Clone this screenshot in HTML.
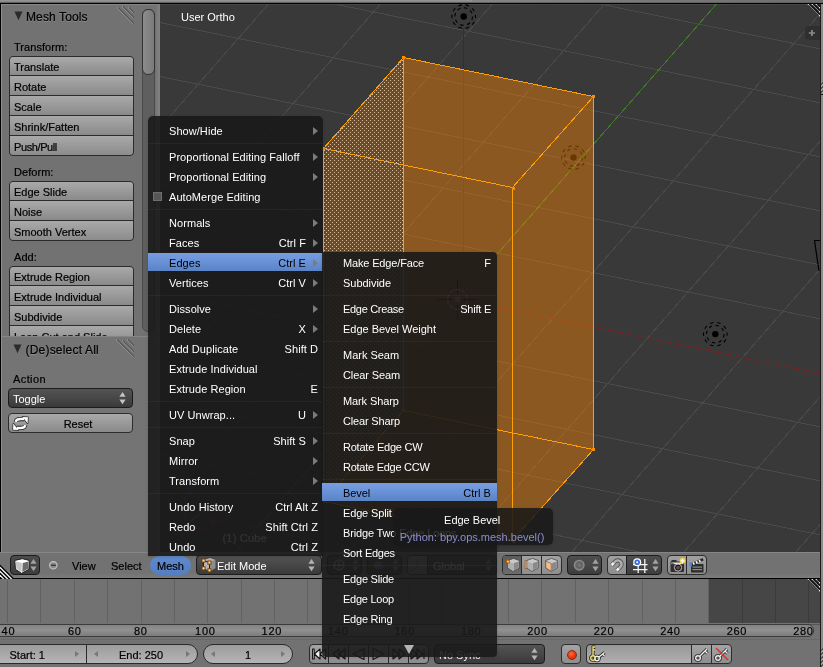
<!DOCTYPE html><html><head><meta charset="utf-8"><title>Blender</title><style>
*{box-sizing:border-box;margin:0;padding:0}
html,body{width:823px;height:667px;overflow:hidden;background:#727272}
body{position:relative;will-change:transform;-webkit-font-smoothing:antialiased;font-family:"Liberation Sans",sans-serif;font-size:11px;color:#000;line-height:20px;-webkit-text-stroke-width:0.2px}
.a{position:absolute}
.t{position:absolute;white-space:nowrap;height:20px;line-height:20px}
.btn{position:absolute;border:1px solid #2d2d2d;background:linear-gradient(#a9a9a9,#8a8a8a);white-space:nowrap}
.grp{position:absolute;border:1px solid #2b2b2b;border-radius:4px;overflow:hidden;background:#2b2b2b}
.grp div{position:absolute;left:0;right:0;background:linear-gradient(#a9a9a9,#8a8a8a);padding-left:4px;white-space:nowrap}
.dark{-webkit-text-stroke-width:0;position:absolute;border:1px solid #1c1c1c;border-radius:4px;background:linear-gradient(#545454,#3a3a3a);color:#fff;white-space:nowrap}
.menu{position:absolute;background:rgba(25,25,25,0.9);color:#fff;-webkit-text-stroke-width:0;box-shadow:0 1px 3px rgba(0,0,0,0.15)}
.mi{position:absolute;left:0;right:0;height:20px;line-height:20px;white-space:nowrap;letter-spacing:0.06px}
.mi .l{position:absolute;left:21px;top:0}
.mi .r{position:absolute;right:17px;top:0}
.mi.sel{height:18px;color:#000;background:linear-gradient(#789ee2,#5a84c8)}
.sep{position:absolute;left:0;right:0;height:1px;background:rgba(255,255,255,0.045)}
.arr{position:absolute;right:5px;top:6px;width:0;height:0;border-left:5px solid #7c7c7c;border-top:4px solid transparent;border-bottom:4px solid transparent}
.nf{position:absolute;top:644px;height:20px;border:1px solid #2a2a2a;background:linear-gradient(#9c9c9c,#b5b5b5);text-align:center;line-height:20px;white-space:nowrap}
.al{position:absolute;left:7px;top:6px;border-right:4px solid #777;border-top:3px solid transparent;border-bottom:3px solid transparent}
.ar{position:absolute;right:7px;top:6px;border-left:4px solid #777;border-top:3px solid transparent;border-bottom:3px solid transparent}
</style></head><body>
<svg class="a" style="left:0;top:0" width="823" height="667" viewBox="0 0 823 667" shape-rendering="crispEdges">
<defs><clipPath id="vp"><rect x="160" y="4" width="660" height="548"/></clipPath>
<pattern id="stip" width="4" height="4" patternUnits="userSpaceOnUse"><rect width="4" height="4" fill="#6b4a28"/><rect x="2" y="0" width="1" height="1" fill="#d4bc9c"/><rect x="0" y="2" width="1" height="1" fill="#d4bc9c"/></pattern>
</defs>
<rect x="160" y="4" width="660" height="548" fill="#393939"/>
<rect x="160" y="4" width="660" height="1" fill="#464646"/>
<g clip-path="url(#vp)">
<g stroke="#4a4a4a" stroke-width="1" opacity="1"><line x1="160" y1="-247.5" x2="820" y2="-113.2"/><line x1="160" y1="-193.5" x2="820" y2="-59.2"/><line x1="160" y1="-139.5" x2="820" y2="-5.2"/><line x1="160" y1="-85.5" x2="820" y2="48.8"/><line x1="160" y1="-31.5" x2="820" y2="102.8"/><line x1="160" y1="22.5" x2="820" y2="156.8"/><line x1="160" y1="76.5" x2="820" y2="210.8"/><line x1="160" y1="130.5" x2="820" y2="264.8"/><line x1="160" y1="184.5" x2="820" y2="318.8"/><line x1="160" y1="292.5" x2="820" y2="426.8"/><line x1="160" y1="346.5" x2="820" y2="480.8"/><line x1="160" y1="400.5" x2="820" y2="534.8"/><line x1="160" y1="454.5" x2="820" y2="588.8"/><line x1="160" y1="508.5" x2="820" y2="642.8"/><line x1="160" y1="562.5" x2="820" y2="696.8"/><line x1="160" y1="616.5" x2="820" y2="750.8"/><line x1="44.5" y1="4" x2="-436.1" y2="552"/><line x1="156.5" y1="4" x2="-324.1" y2="552"/><line x1="268.5" y1="4" x2="-212.1" y2="552"/><line x1="380.5" y1="4" x2="-100.1" y2="552"/><line x1="492.5" y1="4" x2="11.9" y2="552"/><line x1="604.5" y1="4" x2="123.9" y2="552"/><line x1="828.5" y1="4" x2="347.9" y2="552"/><line x1="940.5" y1="4" x2="459.9" y2="552"/><line x1="1052.5" y1="4" x2="571.9" y2="552"/><line x1="1164.5" y1="4" x2="683.9" y2="552"/><line x1="1276.5" y1="4" x2="795.9" y2="552"/><line x1="1388.5" y1="4" x2="907.9" y2="552"/></g>
<line x1="160" y1="238.9" x2="820" y2="373.2" stroke="#6e2525" stroke-width="1"/>
<line x1="716.5" y1="4" x2="235.9" y2="552" stroke="#3c7a26" stroke-width="1"/>
<line x1="463.5" y1="28" x2="463.5" y2="470" stroke="#303030" stroke-width="1"/>
<g shape-rendering="auto"><circle cx="573.5" cy="157.5" r="3.2" fill="#000"/><circle cx="573.5" cy="157.5" r="8.8" fill="none" stroke="#000" stroke-width="1.1" stroke-dasharray="3.4 3.5"/><circle cx="573.5" cy="157.5" r="11.8" fill="none" stroke="#000" stroke-width="1.1" stroke-dasharray="3.6 3.8" stroke-dashoffset="2"/></g>
<polygon points="323.5,148.5 403.5,57.5 593.5,96.5 593.5,449.5 512.5,540.5 323.5,501.5" fill="rgb(255,133,0)" fill-opacity="0.415"/>
<polygon points="323.5,148.5 403.5,57.5 403.5,410.5 323.5,501.5" fill="url(#stip)"/>
<line x1="403.5" y1="57.5" x2="593.5" y2="96.5" stroke="#ffa000" stroke-width="1"/>
<line x1="593.5" y1="96.5" x2="512.5" y2="187.5" stroke="#ffa000" stroke-width="1"/>
<line x1="512.5" y1="187.5" x2="323.5" y2="148.5" stroke="#ffa000" stroke-width="1"/>
<line x1="323.5" y1="148.5" x2="403.5" y2="57.5" stroke="#ffa000" stroke-width="1"/>
<line x1="403.5" y1="410.5" x2="593.5" y2="449.5" stroke="#ffa000" stroke-width="1"/>
<line x1="593.5" y1="449.5" x2="512.5" y2="540.5" stroke="#ffa000" stroke-width="1"/>
<line x1="512.5" y1="540.5" x2="323.5" y2="501.5" stroke="#ffa000" stroke-width="1"/>
<line x1="323.5" y1="501.5" x2="403.5" y2="410.5" stroke="#ffa000" stroke-width="1"/>
<line x1="403.5" y1="57.5" x2="403.5" y2="410.5" stroke="#ffa000" stroke-width="1"/>
<line x1="593.5" y1="96.5" x2="593.5" y2="449.5" stroke="#ffa000" stroke-width="1"/>
<line x1="512.5" y1="187.5" x2="512.5" y2="540.5" stroke="#ffa000" stroke-width="1"/>
<line x1="323.5" y1="148.5" x2="323.5" y2="501.5" stroke="#ffa000" stroke-width="1"/>
<rect x="402" y="56" width="3" height="3" fill="#ff8c00"/>
<rect x="592" y="95" width="3" height="3" fill="#ff8c00"/>
<rect x="322" y="147" width="3" height="3" fill="#ff8c00"/>
<rect x="402" y="409" width="3" height="3" fill="#ff8c00"/>
<rect x="592" y="448" width="3" height="3" fill="#ff8c00"/>
<rect x="322" y="500" width="3" height="3" fill="#ff8c00"/>
<rect x="512" y="187" width="3" height="3" fill="#ff8c00"/>
<rect x="512" y="540" width="3" height="3" fill="#ff8c00"/>
<g shape-rendering="auto"><circle cx="463.7" cy="16.5" r="3.2" fill="#000"/><circle cx="463.7" cy="16.5" r="8.8" fill="none" stroke="#000" stroke-width="1.1" stroke-dasharray="3.4 3.5"/><circle cx="463.7" cy="16.5" r="11.8" fill="none" stroke="#000" stroke-width="1.1" stroke-dasharray="3.6 3.8" stroke-dashoffset="2"/></g>
<g shape-rendering="auto"><circle cx="715.3" cy="334.1" r="3.2" fill="#000"/><circle cx="715.3" cy="334.1" r="8.8" fill="none" stroke="#000" stroke-width="1.1" stroke-dasharray="3.4 3.5"/><circle cx="715.3" cy="334.1" r="11.8" fill="none" stroke="#000" stroke-width="1.1" stroke-dasharray="3.6 3.8" stroke-dashoffset="2"/></g>
<path d="M820,240.5 H814.5 L819,271" fill="none" stroke="#000" stroke-width="1.2" shape-rendering="auto"/>
<g shape-rendering="auto"><path d="M457.5,280 V294 M457.5,305 V320 M437,299.5 H452 M463,299.5 H477" stroke="#000" stroke-width="1"/><circle cx="457.5" cy="299.5" r="10" fill="none" stroke="#fff" stroke-width="1"/><circle cx="457.5" cy="299.5" r="10" fill="none" stroke="#e02020" stroke-width="1" stroke-dasharray="3 3"/></g>
<rect x="455" y="297" width="5" height="5" fill="#e8923a"/>
</g>
<rect x="805" y="26" width="18" height="14" rx="4" fill="#2f2f2f" shape-rendering="auto"/><path d="M808.8,33 H815 M811.9,29.9 V36.1" stroke="#8a8a8a" stroke-width="1.7" shape-rendering="auto"/>
<g shape-rendering="auto" stroke-width="1.1"><line x1="809.6" y1="4" x2="820" y2="14.4" stroke="#161616" stroke-width="1.6"/><line x1="808.0" y1="4" x2="820" y2="16.0" stroke="#8a8a8a" stroke-width="0.9"/><rect x="807.7" y="3.4" width="1.3" height="1.3" fill="#fff"/><rect x="819.1" y="15.1" width="1.3" height="1.3" fill="#fff"/><line x1="813.6" y1="4" x2="820" y2="10.4" stroke="#161616" stroke-width="1.6"/><line x1="812.0" y1="4" x2="820" y2="12.0" stroke="#8a8a8a" stroke-width="0.9"/><rect x="811.7" y="3.4" width="1.3" height="1.3" fill="#fff"/><rect x="819.1" y="11.1" width="1.3" height="1.3" fill="#fff"/><line x1="817.6" y1="4" x2="820" y2="6.4" stroke="#161616" stroke-width="1.6"/><line x1="816.0" y1="4" x2="820" y2="8.0" stroke="#8a8a8a" stroke-width="0.9"/><rect x="815.7" y="3.4" width="1.3" height="1.3" fill="#fff"/><rect x="819.1" y="7.1" width="1.3" height="1.3" fill="#fff"/></g>
</svg>
<div class="a" style="left:0;top:0;width:823px;height:2px;background:linear-gradient(#979797,#848484)"></div>
<div class="a" style="left:472px;top:0;width:351px;height:3px;background:linear-gradient(90deg,#848484,#6e6e6e)"></div>
<div class="a" style="left:0;top:2px;width:823px;height:1px;background:#626262"></div>
<div class="a" style="left:0;top:3px;width:823px;height:1px;background:#000"></div>
<div class="a" style="left:0;top:3px;width:1px;height:575px;background:#000"></div>
<div class="a" style="left:1px;top:4px;width:1px;height:573px;background:#8e8e8e"></div>
<div class="a" style="left:2px;top:4px;width:157px;height:1px;background:#868686"></div>
<div class="a" style="left:820px;top:4px;width:1px;height:663px;background:#1a1a1a"></div>
<div class="a" style="left:821px;top:4px;width:2px;height:663px;background:#8c8c8c"></div>
<div class="a" style="left:820px;top:94px;width:3px;height:1px;background:#1a1a1a"></div>
<div class="a" style="left:821px;top:82px;width:2px;height:11px;background:repeating-linear-gradient(135deg,#a4a4a4 0,#a4a4a4 1.4px,#555 1.4px,#555 2.8px)"></div>
<div class="a" style="left:821px;top:648px;width:2px;height:19px;background:repeating-linear-gradient(135deg,#a4a4a4 0,#a4a4a4 1.4px,#555 1.4px,#555 2.8px)"></div>
<div class="a" style="left:156px;top:4px;width:4px;height:548px;background:linear-gradient(90deg,#767676,#828282)"></div>
<div class="a" style="left:2px;top:5px;width:154px;height:331px;overflow:hidden">
<svg class="a" style="left:12px;top:6px" width="10" height="11" viewBox="0 0 10 11"><polygon points="0.5,0.5 8.5,0.5 4.5,9.2" fill="#2b2b2b"/></svg>
<svg class="a" style="left:115px;top:1px" width="20" height="20" viewBox="0 0 20 20" shape-rendering="crispEdges"><line x1="0.0" y1="1.5" x2="16.0" y2="17.5" stroke="#8e8e8e" stroke-width="1"/><line x1="1.0" y1="1.5" x2="17.0" y2="17.5" stroke="#5c5c5c" stroke-width="1"/><line x1="5.0" y1="0.5" x2="16.0" y2="11.5" stroke="#8e8e8e" stroke-width="1"/><line x1="6.0" y1="0.5" x2="17.0" y2="11.5" stroke="#5c5c5c" stroke-width="1"/><line x1="11.0" y1="1.5" x2="16.0" y2="6.5" stroke="#8e8e8e" stroke-width="1"/><line x1="12.0" y1="1.5" x2="17.0" y2="6.5" stroke="#5c5c5c" stroke-width="1"/></svg>
<div class="t" style="left:24px;top:2px;font-size:12px;letter-spacing:0.12px;text-shadow:0 1px 0 rgba(255,255,255,0.18)">Mesh Tools</div>
<div class="t" style="left:12px;top:31.0px;line-height:23px;height:23px;letter-spacing:0.05px">Transform:</div>
<div class="grp" style="left:7px;top:51px;width:125px;height:100px">
<div style="top:0px;height:18px;line-height:20px">Translate</div>
<div style="top:19px;height:19px;line-height:22px">Rotate</div>
<div style="top:39px;height:19px;line-height:22px">Scale</div>
<div style="top:59px;height:19px;line-height:22px">Shrink/Fatten</div>
<div style="top:79px;height:20px;line-height:22px"><span style="letter-spacing:-0.4px">Push/Pull</span></div>
</div>
<div class="t" style="left:12px;top:156.0px;line-height:23px;height:23px;letter-spacing:0.05px">Deform:</div>
<div class="grp" style="left:7px;top:176px;width:125px;height:60px">
<div style="top:0px;height:18px;line-height:20px">Edge Slide</div>
<div style="top:19px;height:19px;line-height:22px">Noise</div>
<div style="top:39px;height:20px;line-height:22px">Smooth Vertex</div>
</div>
<div class="t" style="left:12px;top:241.0px;line-height:23px;height:23px;letter-spacing:0.05px">Add:</div>
<div class="grp" style="left:7px;top:261px;width:125px;height:100px">
<div style="top:0px;height:18px;line-height:20px">Extrude Region</div>
<div style="top:19px;height:19px;line-height:22px">Extrude Individual</div>
<div style="top:39px;height:19px;line-height:22px">Subdivide</div>
<div style="top:59px;height:19px;line-height:22px">Loop Cut and Slide</div>
<div style="top:79px;height:20px;line-height:22px">Duplicate</div>
</div>
<div class="a" style="left:140px;top:4px;width:13px;height:323px;border-radius:6px;background:#5f5f5f;border:1px solid #4a4a4a"></div>
<div class="a" style="left:140px;top:4px;width:13px;height:66px;border-radius:6px;background:linear-gradient(90deg,#8c8c8c,#7a7a7a);border:1px solid #333"></div>
</div>
<div class="a" style="left:2px;top:336px;width:154px;height:216px;background:#747474;overflow:hidden">
<div class="a" style="left:0;top:0;width:154px;height:1px;background:#858585"></div>
<svg class="a" style="left:11px;top:8px" width="10" height="11" viewBox="0 0 10 11"><polygon points="0.5,0.5 8.5,0.5 4.5,9.2" fill="#2b2b2b"/></svg>
<svg class="a" style="left:114px;top:3px" width="20" height="20" viewBox="0 0 20 20" shape-rendering="crispEdges"><line x1="0.0" y1="0.5" x2="17.0" y2="17.5" stroke="#8e8e8e" stroke-width="1"/><line x1="1.0" y1="0.5" x2="18.0" y2="17.5" stroke="#5c5c5c" stroke-width="1"/><line x1="6.0" y1="1.5" x2="17.0" y2="12.5" stroke="#8e8e8e" stroke-width="1"/><line x1="7.0" y1="1.5" x2="18.0" y2="12.5" stroke="#5c5c5c" stroke-width="1"/><line x1="11.0" y1="0.5" x2="17.0" y2="6.5" stroke="#8e8e8e" stroke-width="1"/><line x1="12.0" y1="0.5" x2="18.0" y2="6.5" stroke="#5c5c5c" stroke-width="1"/></svg>
<div class="t" style="left:23.5px;top:4px;font-size:12px;letter-spacing:0.2px;text-shadow:0 1px 0 rgba(255,255,255,0.18)">(De)select All</div>
<div class="t" style="left:11px;top:33px;letter-spacing:0.4px">Action</div>
<div class="dark" style="left:6px;top:52px;width:125px;height:20px;line-height:21px;padding-left:4px">Toggle<svg class="a" style="right:6px;top:3px" width="7" height="13" viewBox="0 0 7 13"><polygon points="3.5,0 6.6,4.8 0.4,4.8" fill="#c4c4c4"/><polygon points="0.4,7.4 6.6,7.4 3.5,12.2" fill="#c4c4c4"/></svg></div>
<div class="btn" style="left:6px;top:77px;width:125px;height:20px;border-radius:4px;line-height:21px;text-align:center;padding-left:15px">Reset
<svg class="a" style="left:3px;top:2px" width="17" height="15" viewBox="0 0 17 15"><g stroke="#1c1c1c" stroke-linejoin="round"><path d="M3.8,5.9 C4,3.6 5.5,3.1 8.5,3.1 L12,3.1" fill="none" stroke-width="4.2"/><polygon points="10.6,0.9 15.9,1.2 15.6,7.2" fill="#1c1c1c" stroke-width="1.6"/><path d="M13.2,9.1 C13,11.4 11.5,11.9 8.5,11.9 L5,11.9" fill="none" stroke-width="4.2"/><polygon points="6.4,14.1 1.1,13.8 1.4,7.8" fill="#1c1c1c" stroke-width="1.6"/></g><g stroke="#fff"><path d="M3.8,5.9 C4,3.6 5.5,3.1 8.5,3.1 L12,3.1" fill="none" stroke-width="2.5"/><polygon points="10.6,0.9 15.9,1.2 15.6,7.2" fill="#fff" stroke-width="0.3"/><path d="M13.2,9.1 C13,11.4 11.5,11.9 8.5,11.9 L5,11.9" fill="none" stroke-width="2.5"/><polygon points="6.4,14.1 1.1,13.8 1.4,7.8" fill="#fff" stroke-width="0.3"/></g></svg></div>
</div>
<div class="t" style="left:181px;top:7px;color:#fff;-webkit-text-stroke-width:0">User Ortho</div>
<div class="t" style="left:222.5px;top:528px;color:#fff;letter-spacing:0.2px">(1) Cube</div>
<svg class="a" style="left:170px;top:485px" width="60" height="60" viewBox="170 485 60 60"><path d="M185,526 L185.4,496" stroke="#3a50e0" stroke-width="1.2"/><path d="M185,526 L200,513.4" stroke="#40b030" stroke-width="1.2"/><path d="M185,526 L207.5,530" stroke="#e03030" stroke-width="1.2"/></svg>
<div class="t" style="left:210px;top:512px;color:#e03030">x</div><div class="t" style="left:202px;top:496px;color:#40b030">y</div><div class="t" style="left:187px;top:480px;color:#3a50e0">z</div>
<div class="a" style="left:0;top:552px;width:820px;height:26px;background:linear-gradient(#727272 80%,#7c7c7c)"></div>
<div class="a" style="left:0;top:552px;width:820px;height:1px;background:#868686"></div>
<div class="a" style="left:0;top:578px;width:820px;height:1px;background:#000"></div>
<svg class="a" style="left:0;top:564px" width="15" height="15" viewBox="0 564 15 15"><line x1="-1" y1="564.5" x2="14.0" y2="579.5" stroke="#000" stroke-width="1.5"/><line x1="-1" y1="566.5" x2="12.0" y2="579.5" stroke="#f4f4f4" stroke-width="1.5"/><line x1="-1" y1="568.5" x2="10.0" y2="579.5" stroke="#000" stroke-width="1.5"/><line x1="-1" y1="570.5" x2="8.0" y2="579.5" stroke="#f4f4f4" stroke-width="1.5"/><line x1="-1" y1="572.5" x2="6.0" y2="579.5" stroke="#000" stroke-width="1.5"/><line x1="-1" y1="574.5" x2="4.0" y2="579.5" stroke="#f4f4f4" stroke-width="1.5"/><line x1="-1" y1="576.3" x2="2.2" y2="579.5" stroke="#000" stroke-width="1.5"/></svg>
<div class="dark" style="left:10px;top:555px;width:30px;height:20px;background:linear-gradient(#4c4c4c,#3e3e3e)"><svg class="a" style="right:2px;top:3px" width="7" height="13" viewBox="0 0 7 13"><polygon points="3.5,0 6.6,4.8 0.4,4.8" fill="#a2a2a2"/><polygon points="0.4,7.4 6.6,7.4 3.5,12.2" fill="#a2a2a2"/></svg><svg class="a" style="left:2px;top:1px" width="17" height="17" viewBox="-0.5 0 16 16"><polygon points="1.2,3.2 8.3,1.6 14.8,3.2 14.4,11.6 7.6,15.4 1.8,11.6" fill="#fff" stroke="#1a1a1a" stroke-width="0.9"/><polygon points="2.2,4.2 7.8,5.6 7.5,14 2.6,11" fill="#c4c4c4"/><polygon points="8.6,5.6 14,4.2 13.6,11 8.3,14" fill="#6c6c6c"/></svg></div>
<svg class="a" style="left:48px;top:560px" width="11" height="11" viewBox="0 0 11 11"><circle cx="5.3" cy="5.3" r="3.7" fill="#8a8a8a" stroke="#c4c4c4" stroke-width="1.1"/><path d="M3,5.3 H7.8" stroke="#333" stroke-width="1.3"/></svg>
<div class="t" style="left:72px;top:556px">View</div>
<div class="t" style="left:111px;top:556px">Select</div>
<div class="a" style="left:150.3px;top:555.6px;width:40.6px;height:19.6px;border-radius:9.8px;background:linear-gradient(#5f8ace,#547ec0)"></div>
<div class="t" style="left:157px;top:556px">Mesh</div>
<div class="dark" style="left:196px;top:555px;width:126px;height:20px;line-height:21px;padding-left:20px">Edit Mode<svg class="a" style="right:6px;top:3px" width="7" height="13" viewBox="0 0 7 13"><polygon points="3.5,0 6.6,4.8 0.4,4.8" fill="#b4b4b4"/><polygon points="0.4,7.4 6.6,7.4 3.5,12.2" fill="#b4b4b4"/></svg>
<svg class="a" style="left:1.5px;top:-0.5px" width="18" height="18" viewBox="0 0 18 18"><polygon points="4,3.5 11,1.5 16.5,3.5 16.5,12 11,15.5 4,12.5" fill="#b4b4b4" stroke="#3a3a3a" stroke-width="0.8"/><polygon points="10.5,6 16.5,3.5 16.5,12 10.5,15.5" fill="#8c8c8c"/><path d="M4.5,4.5 V12.5 M4.5,4.5 L10.5,6.5 V14" stroke="#222" stroke-width="1" fill="none"/>
<rect x="3.0" y="3.0" width="3.1" height="3.1" fill="#ffe2a8" stroke="#7a3c00" stroke-width="1"/>
<rect x="8.9" y="5.0" width="3.1" height="3.1" fill="#ffe2a8" stroke="#7a3c00" stroke-width="1"/>
<rect x="3.0" y="10.8" width="3.1" height="3.1" fill="#ffe2a8" stroke="#7a3c00" stroke-width="1"/>
<rect x="8.9" y="12.8" width="3.1" height="3.1" fill="#ffe2a8" stroke="#7a3c00" stroke-width="1"/>
</svg></div>
<div class="a" style="left:502px;top:555px;width:60px;height:20px;border:1px solid #2a2a2a;border-radius:4px;background:linear-gradient(#a2a2a2,#8e8e8e);overflow:hidden"><div class="a" style="left:0;top:0;width:18px;height:18px;background:linear-gradient(#5c5c5c,#6c6c6c)"></div><div class="a" style="left:18px;top:0;width:1px;height:18px;background:#2a2a2a"></div><div class="a" style="left:38px;top:0;width:1px;height:18px;background:#2a2a2a"></div>
<svg class="a" style="left:2px;top:1px" width="16" height="16" viewBox="0 0 16 16"><polygon points="2.5,3.6 8.5,1.4 14.4,3.6 14.2,11 8,14.4 2.8,11" fill="#c9c9c9" stroke="#3c3c3c" stroke-width="0.7"/><polygon points="3,4.4 8,6.2 8,13.6 3.3,10.6" fill="#b0b0b0"/><polygon points="8.6,6.2 13.8,4.4 13.6,10.6 8.6,13.6" fill="#8a8a8a"/><rect x="1.6" y="3.2" width="2.7" height="2.7" fill="#ffe0a0" stroke="#b85a00" stroke-width="1"/></svg>
<svg class="a" style="left:21px;top:1px" width="16" height="16" viewBox="0 0 16 16"><polygon points="2.5,3.6 8.5,1.4 14.4,3.6 14.2,11 8,14.4 2.8,11" fill="#c9c9c9" stroke="#3c3c3c" stroke-width="0.7"/><polygon points="3,4.4 8,6.2 8,13.6 3.3,10.6" fill="#b0b0b0"/><polygon points="8.6,6.2 13.8,4.4 13.6,10.6 8.6,13.6" fill="#8a8a8a"/><rect x="1.1" y="3.8" width="1.8" height="8" fill="#ecc092" stroke="#8a5a30" stroke-width="0.7"/></svg>
<svg class="a" style="left:40px;top:1px" width="16" height="16" viewBox="0 0 16 16"><polygon points="2.5,3.6 8.5,1.4 14.4,3.6 14.2,11 8,14.4 2.8,11" fill="#c9c9c9" stroke="#3c3c3c" stroke-width="0.7"/><polygon points="3,4.4 8,6.2 8,13.6 3.3,10.6" fill="#b0b0b0"/><polygon points="8.6,6.2 13.8,4.4 13.6,10.6 8.6,13.6" fill="#8a8a8a"/><polygon points="2.8,4.2 8.2,6.4 8.2,14.2 2.8,10.8" fill="#ecc092" stroke="#8a5a30" stroke-width="0.7"/></svg>
</div>
<div class="dark" style="left:567px;top:555px;width:35px;height:20px;background:linear-gradient(#4e4e4e,#3e3e3e)"><svg class="a" style="right:2px;top:3px" width="7" height="13" viewBox="0 0 7 13"><polygon points="3.5,0 6.6,4.8 0.4,4.8" fill="#a2a2a2"/><polygon points="0.4,7.4 6.6,7.4 3.5,12.2" fill="#a2a2a2"/></svg><svg class="a" style="left:5px;top:3px" width="13" height="13" viewBox="0 0 13 13"><circle cx="6.2" cy="6.2" r="4.8" fill="#6a6a6a" stroke="#8c8c8c" stroke-width="1.4"/><circle cx="6.2" cy="6.2" r="2.4" fill="#747474" stroke="#5a5a5a" stroke-width="0.8"/></svg></div>
<div class="btn" style="left:607px;top:555px;width:20px;height:20px;border-radius:4px 0 0 4px;background:linear-gradient(#a0a0a0,#8e8e8e)"><svg class="a" style="left:1px;top:1px" width="17" height="16" viewBox="0 0 17 16"><path d="M2.8,8 L6.4,4.35 A3.7,3.7 0 0 1 11.6,9.6 L7.9,13.3" fill="none" stroke="#505050" stroke-width="4.1"/><path d="M2.8,8 L6.4,4.35 A3.7,3.7 0 0 1 11.6,9.6 L7.9,13.3" fill="none" stroke="#b0b0b0" stroke-width="2.5"/><path d="M2.8,8 L4.6,6.2 M7.9,13.3 L9.7,11.5" stroke="#f6f6f6" stroke-width="2.5"/></svg></div>
<div class="dark" style="left:626px;top:555px;width:36px;height:20px;border-radius:0 4px 4px 0;background:linear-gradient(#4e4e4e,#3e3e3e)"><svg class="a" style="right:2px;top:3px" width="7" height="13" viewBox="0 0 7 13"><polygon points="3.5,0 6.6,4.8 0.4,4.8" fill="#a2a2a2"/><polygon points="0.4,7.4 6.6,7.4 3.5,12.2" fill="#a2a2a2"/></svg><svg class="a" style="left:4.5px;top:0.5px" width="17" height="17" viewBox="0 0 17 17"><path d="M6.2,2 V16 M12.8,2 V16 M1,7.6 H15.5 M1,12.6 H15.5" stroke="#f4f4f4" stroke-width="1.3"/><circle cx="5.2" cy="5.2" r="4" fill="#fff"/><circle cx="5.2" cy="5.2" r="2.8" fill="#3c6edc"/><circle cx="5.2" cy="5.2" r="1" fill="#fff"/></svg></div>
<div class="btn" style="left:667px;top:555px;width:20px;height:20px;border-radius:4px 0 0 4px;background:linear-gradient(#a0a0a0,#8e8e8e)"><svg class="a" style="left:1px;top:1px" width="18" height="17" viewBox="0 0 18 17"><rect x="1.5" y="4.5" width="13.5" height="10.5" rx="1" fill="#303030"/><rect x="2.5" y="3" width="5" height="2" fill="#303030"/><rect x="2.5" y="5.5" width="11.5" height="1.6" fill="#e8e8e8"/><rect x="3" y="6" width="1.6" height="1" fill="#e03030"/><circle cx="9" cy="10.6" r="3.6" fill="#1c1c1c" stroke="#d0d0d0" stroke-width="0.9"/><circle cx="9" cy="10.6" r="1.9" fill="#6e4648"/><circle cx="13.5" cy="3.8" r="3" fill="#f6cf3a"/><path d="M13.5,1.8 V5.8 M11.5,3.8 H15.5" stroke="#fff" stroke-width="1.2"/></svg></div>
<div class="btn" style="left:686px;top:555px;width:21px;height:20px;border-radius:0 4px 4px 0;background:linear-gradient(#a0a0a0,#8e8e8e)"><svg class="a" style="left:1px;top:0" width="18" height="18" viewBox="0 0 18 18"><rect x="3" y="8" width="12.5" height="8.5" fill="#2c2c2c"/><rect x="4.5" y="10.5" width="9.5" height="1.2" fill="#8a8a8a"/><rect x="4.5" y="13" width="9.5" height="1.2" fill="#8a8a8a"/><polygon points="2.6,7.4 14.8,2 15.6,4.4 3.4,9.6" fill="#2c2c2c"/><path d="M5.2,6.4 l1,2.2 M8.2,5.1 l1,2.2 M11.2,3.8 l1,2.2" stroke="#f0f0f0" stroke-width="1.7"/><rect x="1.2" y="6.4" width="2.6" height="4.2" fill="#4a8ae8"/></svg></div>
<div class="dark" style="left:327px;top:555px;width:35px;height:20px"><svg class="a" style="right:2px;top:3px" width="7" height="13" viewBox="0 0 7 13"><polygon points="3.5,0 6.6,4.8 0.4,4.8" fill="#a2a2a2"/><polygon points="0.4,7.4 6.6,7.4 3.5,12.2" fill="#a2a2a2"/></svg><svg class="a" style="left:4px;top:2px" width="14" height="14" viewBox="0 0 14 14"><circle cx="7" cy="7" r="5" fill="none" stroke="#ccc" stroke-width="1.2"/><path d="M2,7 H12 M7,2 V12" stroke="#ccc" stroke-width="1"/></svg></div>
<div class="dark" style="left:367px;top:555px;width:35px;height:20px"><svg class="a" style="right:2px;top:3px" width="7" height="13" viewBox="0 0 7 13"><polygon points="3.5,0 6.6,4.8 0.4,4.8" fill="#a2a2a2"/><polygon points="0.4,7.4 6.6,7.4 3.5,12.2" fill="#a2a2a2"/></svg><svg class="a" style="left:4px;top:2px" width="14" height="14" viewBox="0 0 14 14"><circle cx="6" cy="7" r="4" fill="#888"/><circle cx="9" cy="9" r="2.4" fill="#4a7ae0"/></svg></div>
<div class="btn" style="left:407px;top:555px;width:21px;height:20px;border-radius:4px 0 0 4px"><svg class="a" style="left:1px;top:1px" width="17" height="16" viewBox="0 0 17 16"><path d="M8.5,9 V1.5" stroke="#4a80e8" stroke-width="1.6"/><path d="M8.5,9 L2,14" stroke="#e04040" stroke-width="1.6"/><path d="M8.5,9 L15,14" stroke="#50c040" stroke-width="1.6"/></svg></div>
<div class="dark" style="left:427px;top:555px;width:70px;height:20px;border-radius:0 4px 4px 0;line-height:21px;padding-left:5px">Global<svg class="a" style="right:4px;top:3px" width="7" height="13" viewBox="0 0 7 13"><polygon points="3.5,0 6.6,4.8 0.4,4.8" fill="#a2a2a2"/><polygon points="0.4,7.4 6.6,7.4 3.5,12.2" fill="#a2a2a2"/></svg></div>
<div class="a" style="left:0;top:579px;width:820px;height:44px;background:#727272;overflow:hidden">
<div class="a" style="left:709px;top:0;width:111px;height:45px;background:#464646"></div>
<div class="a" style="left:7px;top:0;width:1px;height:45px;background:rgba(0,0,0,0.15)"></div>
<div class="a" style="left:40px;top:0;width:1px;height:45px;background:rgba(0,0,0,0.15)"></div>
<div class="a" style="left:74px;top:0;width:1px;height:45px;background:rgba(0,0,0,0.15)"></div>
<div class="a" style="left:107px;top:0;width:1px;height:45px;background:rgba(0,0,0,0.15)"></div>
<div class="a" style="left:141px;top:0;width:1px;height:45px;background:rgba(0,0,0,0.15)"></div>
<div class="a" style="left:174px;top:0;width:1px;height:45px;background:rgba(0,0,0,0.15)"></div>
<div class="a" style="left:207px;top:0;width:1px;height:45px;background:rgba(0,0,0,0.15)"></div>
<div class="a" style="left:241px;top:0;width:1px;height:45px;background:rgba(0,0,0,0.15)"></div>
<div class="a" style="left:274px;top:0;width:1px;height:45px;background:rgba(0,0,0,0.15)"></div>
<div class="a" style="left:307px;top:0;width:1px;height:45px;background:rgba(0,0,0,0.15)"></div>
<div class="a" style="left:341px;top:0;width:1px;height:45px;background:rgba(0,0,0,0.15)"></div>
<div class="a" style="left:374px;top:0;width:1px;height:45px;background:rgba(0,0,0,0.15)"></div>
<div class="a" style="left:408px;top:0;width:1px;height:45px;background:rgba(0,0,0,0.15)"></div>
<div class="a" style="left:441px;top:0;width:1px;height:45px;background:rgba(0,0,0,0.15)"></div>
<div class="a" style="left:474px;top:0;width:1px;height:45px;background:rgba(0,0,0,0.15)"></div>
<div class="a" style="left:508px;top:0;width:1px;height:45px;background:rgba(0,0,0,0.15)"></div>
<div class="a" style="left:541px;top:0;width:1px;height:45px;background:rgba(0,0,0,0.15)"></div>
<div class="a" style="left:575px;top:0;width:1px;height:45px;background:rgba(0,0,0,0.15)"></div>
<div class="a" style="left:608px;top:0;width:1px;height:45px;background:rgba(0,0,0,0.15)"></div>
<div class="a" style="left:642px;top:0;width:1px;height:45px;background:rgba(0,0,0,0.15)"></div>
<div class="a" style="left:675px;top:0;width:1px;height:45px;background:rgba(0,0,0,0.15)"></div>
<div class="a" style="left:708px;top:0;width:1px;height:45px;background:rgba(0,0,0,0.15)"></div>
<div class="a" style="left:742px;top:0;width:1px;height:45px;background:rgba(0,0,0,0.15)"></div>
<div class="a" style="left:775px;top:0;width:1px;height:45px;background:rgba(0,0,0,0.15)"></div>
<div class="a" style="left:808px;top:0;width:1px;height:45px;background:rgba(0,0,0,0.15)"></div>
<div class="a" style="left:842px;top:0;width:1px;height:45px;background:rgba(0,0,0,0.15)"></div>
</div>
<div class="a" style="left:1px;top:624px;width:819px;height:1px;background:#555"></div>
<div class="a" style="left:-8px;top:624px;width:822px;height:13px;border:1px solid #3c3c3c;border-radius:6px;background:linear-gradient(#838383,#909090 45%,#7c7c7c)"></div>
<div class="t" style="left:1.6px;top:621px;letter-spacing:0.7px">40</div>
<div class="t" style="left:67.9px;top:621px;letter-spacing:0.7px">60</div>
<div class="t" style="left:134.0px;top:621px;letter-spacing:0.7px">80</div>
<div class="t" style="left:195.1px;top:621px;letter-spacing:0.7px">100</div>
<div class="t" style="left:261.6px;top:621px;letter-spacing:0.7px">120</div>
<div class="t" style="left:328.0px;top:621px;letter-spacing:0.7px">140</div>
<div class="t" style="left:394.5px;top:621px;letter-spacing:0.7px">160</div>
<div class="t" style="left:460.9px;top:621px;letter-spacing:0.7px">180</div>
<div class="t" style="left:527.3px;top:621px;letter-spacing:0.7px">200</div>
<div class="t" style="left:593.8px;top:621px;letter-spacing:0.7px">220</div>
<div class="t" style="left:660.2px;top:621px;letter-spacing:0.7px">240</div>
<div class="t" style="left:726.7px;top:621px;letter-spacing:0.7px">260</div>
<div class="t" style="left:793.2px;top:621px;letter-spacing:0.7px">280</div>
<div class="a" style="left:1px;top:639px;width:819px;height:1px;background:#686868"></div>
<svg class="a" style="left:800px;top:579px" width="20" height="20" viewBox="800 579 20 20"><g shape-rendering="auto" stroke-width="1.1"><line x1="809.6" y1="579" x2="820" y2="589.4" stroke="#161616" stroke-width="1.6"/><line x1="808.0" y1="579" x2="820" y2="591.0" stroke="#8a8a8a" stroke-width="0.9"/><rect x="807.7" y="578.4" width="1.3" height="1.3" fill="#fff"/><rect x="819.1" y="590.1" width="1.3" height="1.3" fill="#fff"/><line x1="813.6" y1="579" x2="820" y2="585.4" stroke="#161616" stroke-width="1.6"/><line x1="812.0" y1="579" x2="820" y2="587.0" stroke="#8a8a8a" stroke-width="0.9"/><rect x="811.7" y="578.4" width="1.3" height="1.3" fill="#fff"/><rect x="819.1" y="586.1" width="1.3" height="1.3" fill="#fff"/><line x1="817.6" y1="579" x2="820" y2="581.4" stroke="#161616" stroke-width="1.6"/><line x1="816.0" y1="579" x2="820" y2="583.0" stroke="#8a8a8a" stroke-width="0.9"/><rect x="815.7" y="578.4" width="1.3" height="1.3" fill="#fff"/><rect x="819.1" y="582.1" width="1.3" height="1.3" fill="#fff"/></g></svg>
<div class="nf" style="left:-12px;width:99px;border-radius:10px 0 0 10px"><div class="t" style="left:20.5px;top:0">Start: 1</div><div class="ar"></div></div>
<div class="nf" style="left:86px;width:112px;border-radius:0 10px 10px 0;padding-right:2px"><div class="al"></div>End: 250<div class="ar"></div></div>
<div class="nf" style="left:203px;width:90px;border-radius:10px">1<div class="al"></div><div class="ar"></div></div>
<div class="a" style="left:309px;top:644px;width:120px;height:20px;border:1px solid #2a2a2a;border-radius:4px;background:linear-gradient(#a4a4a4,#8c8c8c)"></div>
<div class="a" style="left:328px;top:645px;width:1px;height:18px;background:#2a2a2a"></div>
<div class="a" style="left:348px;top:645px;width:1px;height:18px;background:#2a2a2a"></div>
<div class="a" style="left:368px;top:645px;width:1px;height:18px;background:#2a2a2a"></div>
<div class="a" style="left:388px;top:645px;width:1px;height:18px;background:#2a2a2a"></div>
<div class="a" style="left:408px;top:645px;width:1px;height:18px;background:#2a2a2a"></div>
<svg class="a" style="left:309px;top:644px" width="120" height="20" viewBox="0 0 120 20" fill="#f0f0f0" stroke="#111" stroke-width="1.1" stroke-linejoin="round"><path d="M3.6,5 h1.6 v10 h-1.6 Z M5.4,10 L11,5 V15 Z M11,10 L16.6,5 V15 Z"/><g fill="none"><path d="M24,10 L30,5 V15 Z M30,10 L36,5 V15 Z"/><path d="M44,10 L55,4.5 V15.5 Z"/><path d="M75,10 L64,4.5 V15.5 Z"/><path d="M96,10 L90,5 V15 Z M90,10 L84,5 V15 Z"/><path d="M115,5 V15 M114,10 L108,5 V15 Z M108,10 L102,5 V15 Z"/></g></svg>
<div class="dark" style="left:434px;top:644px;width:111px;height:20px;line-height:21px;padding-left:4px">No Sync<svg class="a" style="right:6px;top:3px" width="7" height="13" viewBox="0 0 7 13"><polygon points="3.5,0 6.6,4.8 0.4,4.8" fill="#b4b4b4"/><polygon points="0.4,7.4 6.6,7.4 3.5,12.2" fill="#b4b4b4"/></svg></div>
<div class="btn" style="left:561px;top:644px;width:20px;height:20px;border-radius:4px;background:linear-gradient(#a4a4a4,#8e8e8e)"><div class="a" style="left:4.5px;top:4.5px;width:10px;height:10px;border-radius:5px;background:radial-gradient(circle at 40% 35%,#ff6a3a,#e4300c 60%);border:1px solid #8a2a14"></div></div>
<div class="a" style="left:586px;top:644px;width:106px;height:20px;border:1px solid #2a2a2a;border-radius:4px 0 0 4px;background:linear-gradient(#979797,#b0b0b0)"></div>
<div class="btn" style="left:691px;top:644px;width:21px;height:20px;background:linear-gradient(#a4a4a4,#8e8e8e)"></div>
<div class="btn" style="left:711px;top:644px;width:21px;height:20px;border-radius:0 4px 4px 0;background:linear-gradient(#a4a4a4,#8e8e8e)"></div>
<svg class="a" style="left:693px;top:645px" width="18" height="18" viewBox="0 0 18 18"><g fill="none" stroke="#222" stroke-width="3"><circle cx="5" cy="13" r="2.3"/><path d="M7,11 L14,4 M12,6 L14.5,8.5"/></g><g fill="none" stroke="#f0f0f0" stroke-width="1.4"><circle cx="5" cy="13" r="2.3"/><path d="M7,11 L14,4 M12,6 L14.5,8.5"/></g></svg>
<svg class="a" style="left:713px;top:645px" width="18" height="18" viewBox="0 0 18 18"><g fill="none" stroke="#222" stroke-width="3"><circle cx="5" cy="13" r="2.3"/><path d="M7,11 L14,4 M12,6 L14.5,8.5"/></g><g fill="none" stroke="#f0f0f0" stroke-width="1.4"><circle cx="5" cy="13" r="2.3"/><path d="M7,11 L14,4 M12,6 L14.5,8.5"/></g><path d="M3,3 L15,15" stroke="#e03030" stroke-width="1.6"/></svg>
<svg class="a" style="left:588px;top:645px" width="20" height="18" viewBox="0 0 20 18"><g fill="none" stroke="#222" stroke-width="3"><circle cx="9" cy="13.5" r="2.2"/><path d="M11,12 L16.5,7.5 M14.5,9 L16.5,11"/><circle cx="5" cy="13" r="2.3"/><path d="M5,10.5 V2 H7.5 M5,5 H7"/></g><g fill="none" stroke="#f0f0f0" stroke-width="1.4"><circle cx="9" cy="13.5" r="2.2"/><path d="M11,12 L16.5,7.5 M14.5,9 L16.5,11"/></g><g fill="none" stroke="#f3e27a" stroke-width="1.4"><circle cx="5" cy="13" r="2.3"/><path d="M5,10.5 V2 H7.5 M5,5 H7"/></g></svg>
<div class="menu" style="left:148px;top:116px;width:175px;height:440px;border-radius:5px 5px 0 0">
<div class="mi" style="top:5px"><span class="l">Show/Hide</span><span class="arr"></span></div>
<div class="sep" style="top:27px"></div>
<div class="mi" style="top:31px"><span class="l">Proportional Editing Falloff</span><span class="arr"></span></div>
<div class="mi" style="top:51px"><span class="l">Proportional Editing</span><span class="arr"></span></div>
<div class="mi" style="top:71px"><span class="l">AutoMerge Editing</span></div>
<div class="sep" style="top:93px"></div>
<div class="mi" style="top:97px"><span class="l">Normals</span><span class="arr"></span></div>
<div class="mi" style="top:117px"><span class="l">Faces</span><span class="r" style="right:17px">Ctrl F</span><span class="arr"></span></div>
<div class="mi sel" style="top:137px"><span class="l">Edges</span><span class="r" style="right:17px">Ctrl E</span><span class="arr"></span></div>
<div class="mi" style="top:157px"><span class="l">Vertices</span><span class="r" style="right:17px">Ctrl V</span><span class="arr"></span></div>
<div class="sep" style="top:179px"></div>
<div class="mi" style="top:183px"><span class="l">Dissolve</span><span class="arr"></span></div>
<div class="mi" style="top:203px"><span class="l">Delete</span><span class="r" style="right:17px">X</span><span class="arr"></span></div>
<div class="mi" style="top:223px"><span class="l">Add Duplicate</span><span class="r" style="right:5px">Shift D</span></div>
<div class="mi" style="top:243px"><span class="l">Extrude Individual</span></div>
<div class="mi" style="top:263px"><span class="l">Extrude Region</span><span class="r" style="right:5px">E</span></div>
<div class="sep" style="top:285px"></div>
<div class="mi" style="top:289px"><span class="l">UV Unwrap...</span><span class="r" style="right:17px">U</span><span class="arr"></span></div>
<div class="sep" style="top:311px"></div>
<div class="mi" style="top:315px"><span class="l">Snap</span><span class="r" style="right:17px">Shift S</span><span class="arr"></span></div>
<div class="mi" style="top:335px"><span class="l">Mirror</span><span class="arr"></span></div>
<div class="mi" style="top:355px"><span class="l">Transform</span><span class="arr"></span></div>
<div class="sep" style="top:377px"></div>
<div class="mi" style="top:381px"><span class="l">Undo History</span><span class="r" style="right:5px">Ctrl Alt Z</span></div>
<div class="mi" style="top:401px"><span class="l">Redo</span><span class="r" style="right:5px">Shift Ctrl Z</span></div>
<div class="mi" style="top:421px"><span class="l">Undo</span><span class="r" style="right:5px">Ctrl Z</span></div>
<div class="a" style="left:5px;top:76px;width:9px;height:9px;background:#575757;border:1px solid #6e6e6e"></div>
</div>
<div class="menu" style="left:322px;top:252px;width:175px;height:405px;border-radius:0 4px 4px 4px">
<div class="mi" style="top:1px"><span class="l" style="left:21px;letter-spacing:-0.154px;">Make Edge/Face</span><span class="r" style="right:6px;">F</span></div>
<div class="mi" style="top:21px"><span class="l" style="left:21px;letter-spacing:-0.029px;">Subdivide</span></div>
<div class="sep" style="top:43px"></div>
<div class="mi" style="top:47px"><span class="l" style="left:21px;letter-spacing:-0.304px;">Edge Crease</span><span class="r" style="right:6px;letter-spacing:-0.226px;">Shift E</span></div>
<div class="mi" style="top:67px"><span class="l" style="left:21px;letter-spacing:-0.022px;">Edge Bevel Weight</span></div>
<div class="sep" style="top:89px"></div>
<div class="mi" style="top:93px"><span class="l" style="left:21px;letter-spacing:-0.018px;">Mark Seam</span></div>
<div class="mi" style="top:113px"><span class="l" style="left:21px;letter-spacing:-0.090px;">Clear Seam</span></div>
<div class="sep" style="top:135px"></div>
<div class="mi" style="top:139px"><span class="l" style="left:21px;letter-spacing:-0.110px;">Mark Sharp</span></div>
<div class="mi" style="top:159px"><span class="l" style="left:21px;letter-spacing:-0.167px;">Clear Sharp</span></div>
<div class="sep" style="top:181px"></div>
<div class="mi" style="top:185px"><span class="l" style="left:21px;letter-spacing:-0.226px;">Rotate Edge CW</span></div>
<div class="mi" style="top:205px"><span class="l" style="left:21px;letter-spacing:-0.260px;">Rotate Edge CCW</span></div>
<div class="sep" style="top:227px"></div>
<div class="mi sel" style="top:231px"><span class="l" style="left:21px;letter-spacing:-0.060px;">Bevel</span><span class="r" style="right:6px;">Ctrl B</span></div>
<div class="mi" style="top:251px"><span class="l" style="left:21px;letter-spacing:-0.150px;">Edge Split</span></div>
<div class="mi" style="top:271px"><span class="l" style="left:21px;letter-spacing:-0.154px;">Bridge Two Edge Loops</span></div>
<div class="mi" style="top:291px"><span class="l" style="left:21px;letter-spacing:-0.260px;">Sort Edges</span></div>
<div class="sep" style="top:313px"></div>
<div class="mi" style="top:317px"><span class="l" style="left:21px;letter-spacing:-0.230px;">Edge Slide</span></div>
<div class="mi" style="top:337px"><span class="l" style="left:21px;letter-spacing:-0.262px;">Edge Loop</span></div>
<div class="mi" style="top:357px"><span class="l" style="left:21px;letter-spacing:-0.229px;">Edge Ring</span></div>
<div class="a" style="left:82px;top:393px;border-top:9px solid #b4b4b4;border-left:5px solid transparent;border-right:5px solid transparent"></div>
</div>
<div class="a" style="left:393.7px;top:507.7px;width:159.8px;height:37.3px;border-radius:5px;background:rgba(25,25,25,0.88);box-shadow:0 1px 3px rgba(0,0,0,0.2);-webkit-text-stroke-width:0"><div class="t" style="left:0;width:160px;top:2px;text-align:center;color:#fff;padding-right:3px">Edge Bevel</div><div class="t" style="left:6px;top:19px;color:#8c8cd0">Python: bpy.ops.mesh.bevel()</div></div>
</body></html>
